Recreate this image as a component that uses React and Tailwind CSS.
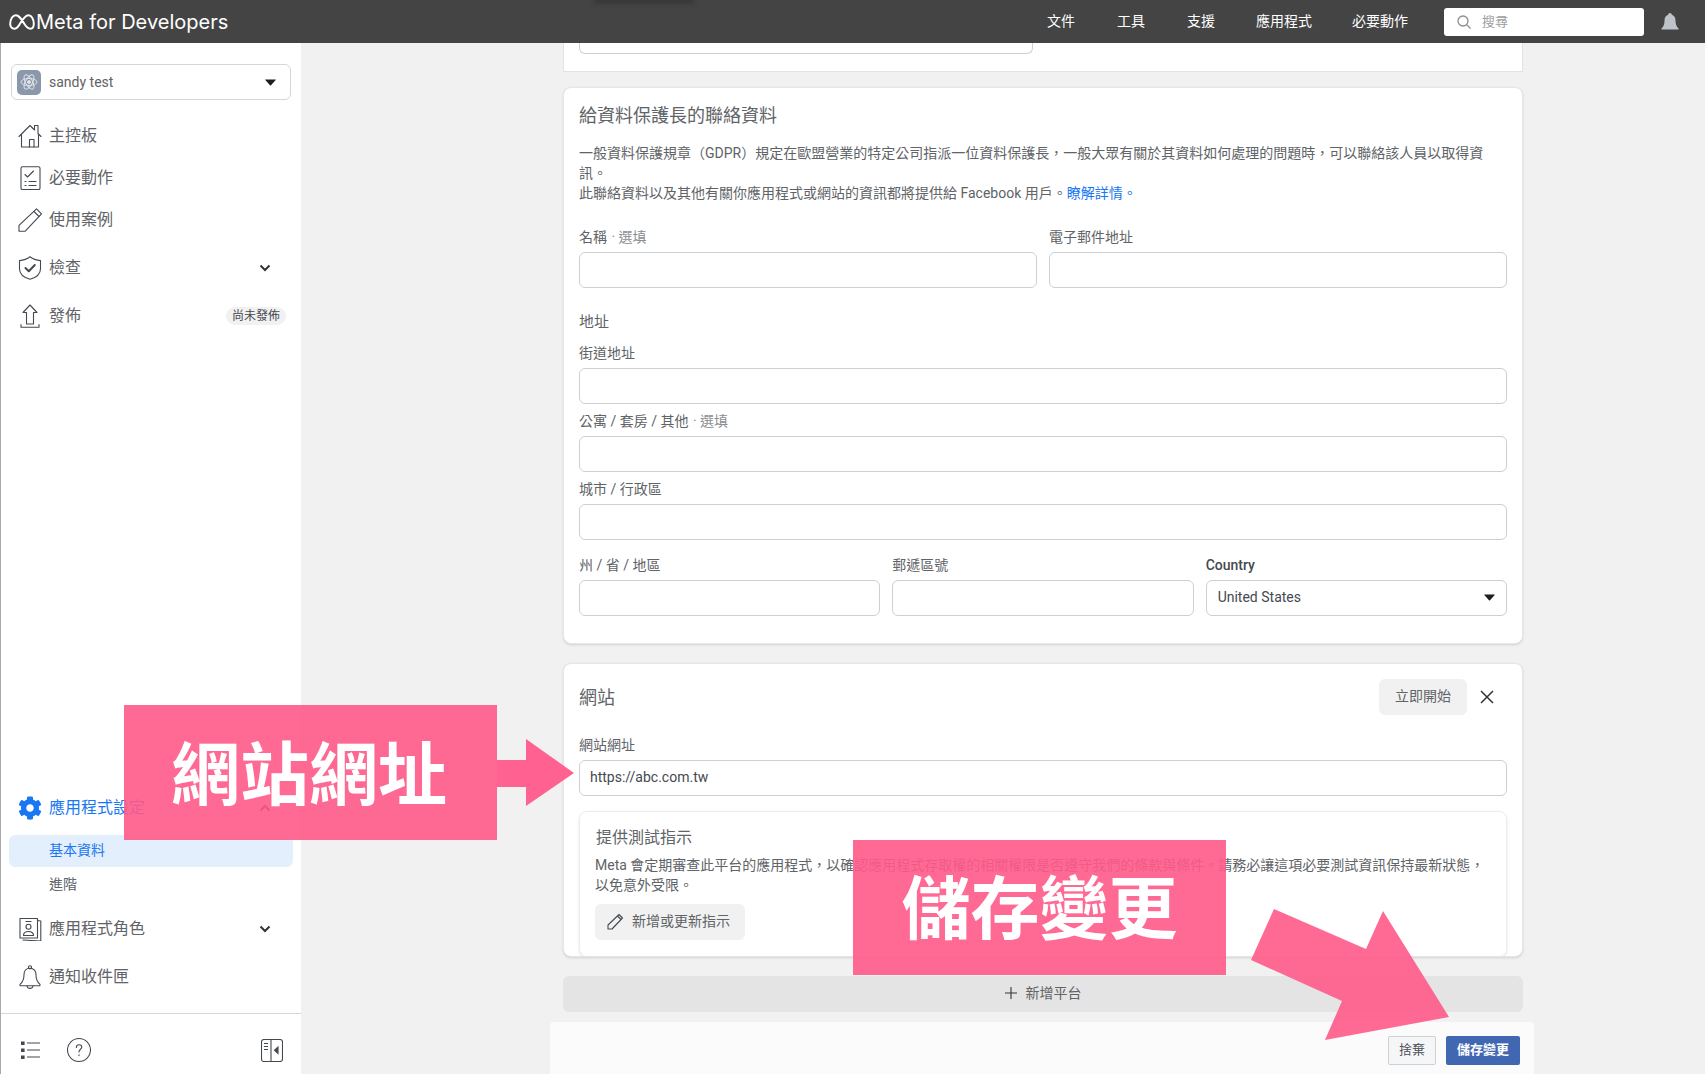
import React from "react";
import { FaCog } from "react-icons/fa";

const fontStack = "font-['Roboto','Noto_Sans_CJK_TC',sans-serif]";

const topLinks = [
  { label: "文件", gap: "mr-[42px]" },
  { label: "工具", gap: "mr-[42px]" },
  { label: "支援", gap: "mr-[41px]" },
  { label: "應用程式", gap: "mr-[40px]" },
  { label: "必要動作", gap: "mr-[36px]" },
];

const MetaLogo = () => (
  <svg width="26" height="16" viewBox="0 0 26 16" fill="none" stroke="white" strokeWidth="2">
    <path d="M1.200 10C1.200 5 3.700 1.300 6.800 1.300 9.800 1.300 11.800 4 15.800 10.500 17.800 13.500 19.300 14.700 21.300 14.700 23.500 14.700 24.800 12.800 24.800 9.800 24.800 4.800 22.500 1.300 19.500 1.300 16.500 1.300 14 4.500 10.500 10.500 8.800 13.500 7.300 14.700 5.300 14.700 2.800 14.700 1.200 12.800 1.200 10z" strokeLinejoin="round" />
  </svg>
);

const Icon = ({ children, className = "" }) => (
  <svg width="24" height="24" viewBox="0 0 24 24" fill="none" stroke="#444950" strokeWidth="1.1" strokeLinecap="round" strokeLinejoin="round" className={className}>
    {children}
  </svg>
);

const HomeIcon = () => (
  <Icon>
    <path d="M1 12.500 12 1.500l4.500 4.500V1.500h3.500V9.500l3 3" />
    <path d="M3.500 10.500V23h17V10.500" />
    <path d="M11.500 23v-7.500h4.500V23" />
  </Icon>
);

const ChecklistIcon = () => (
  <Icon>
    <rect x="3" y="0.800" width="19" height="22.800" rx="1.500" />
    <path d="m7 8.500 2.500 2.500 6-6" />
    <path d="M7 15.500h1M11 15.500h7M7 19.500h1M11 19.500h7" />
  </Icon>
);

const PencilIcon = () => (
  <Icon>
    <path d="M1 23.300V17.300L18.500 0.800l5 5L7 23.300z" />
    <path d="m16 3.500 5 5" />
  </Icon>
);

const ShieldIcon = () => (
  <Icon>
    <path d="M12 0.800c3 2.400 6.500 3.500 10.500 3.800v8.200c0 5-4 8.700-10.500 10.500C5.500 21.500 1.500 17.800 1.500 12.800V4.600C5.500 4.300 9 3.200 12 0.800z" />
    <path d="m7.500 12 3.300 3.300 6-6.300" strokeWidth="2" />
  </Icon>
);

const UploadIcon = () => (
  <Icon>
    <path d="M3 20.500v2.700h18v-2.700" />
    <path d="M12 1 5 8.500h3.500V20h7V8.500H19z" />
  </Icon>
);

const RolesIcon = () => (
  <Icon>
    <path d="M2 1.500h17.500v19.500H2z" />
    <path d="M19.500 3.500 22.800 4v20L5 23" />
    <circle cx="10.500" cy="9.800" r="2.500" />
    <path d="M5.500 18.500c0-2.600 2.200-4 5-4s5 1.400 5 4z" />
    <path d="M8 4.500h5" />
  </Icon>
);

const BellIcon = () => (
  <Icon>
    <path d="M12 3.200c-4 0-6 3-6 6.500 0 5-1 7-3.800 9.500-.6.700-.2 1.600.7 1.600h18.200c.9 0 1.300-.9.700-1.600C19 16.700 18 14.700 18 9.700c0-3.500-2-6.500-6-6.500z" />
    <circle cx="12" cy="2.300" r="1.600" />
    <path d="M9 21c.3 1.500 1.500 2.400 3 2.400s2.700-.9 3-2.400" />
  </Icon>
);

const Chevron = ({ up = false, className = "" }) => (
  <svg width="12" height="8" viewBox="0 0 12 8" fill="none" stroke="#333" strokeWidth="2" className={className}>
    <path d={up ? "M1.500 6.500 6 2l4.500 4.500" : "M1.500 1.500 6 6l4.500-4.500"} />
  </svg>
);

const Caret = () => (
  <svg width="11" height="7" viewBox="0 0 11 7" fill="#1c1e21">
    <path d="M0.500 0.500h10q.5 0 .2.500L6 6.300q-.5.500-1 0L.3 1Q0 .5.500.5z" />
  </svg>
);

const NavRow = ({ icon, label, right, className = "" }) => (
  <div className={`flex items-center h-[24px] pl-[17px] pr-[15px] ${className}`}>
    <span className="w-[24px] h-[24px] flex-none">{icon}</span>
    <span className="ml-[7px] text-[16px] text-[#606367]">{label}</span>
    {right && <span className="ml-auto flex items-center">{right}</span>}
  </div>
);

const Field = ({ label, hint, value, className = "" }) => (
  <div className={className}>
    <div className="h-[20px] leading-[20px] text-[14px] text-[#606367]">
      {label}
      {hint && <span className="ml-[1px] text-[#8a8d91]"> · {hint}</span>}
    </div>
    <div className="mt-[5px] h-[36px] bg-white border border-[#ccd0d5] rounded-[6px] px-[10px] flex items-center text-[14px] text-[#444950]">{value}</div>
  </div>
);

const Sidebar = () => (
  <aside className="w-[301px] flex-none bg-white border-l border-[#a9a9a9] flex flex-col">
    <div className="mt-[21px] ml-[10px] mr-[10px] h-[36px] border border-[#d4d6da] rounded-[6px] flex items-center pl-[5px] pr-[14px]">
      <div className="w-[24px] h-[25px] rounded-[5px] bg-[#8b97ab] flex items-center justify-center">
        <svg width="18" height="18" viewBox="0 0 18 18" fill="none" stroke="#dfe3ea" strokeWidth="1">
          <ellipse cx="9" cy="9" rx="8" ry="3.500" />
          <ellipse cx="9" cy="9" rx="8" ry="3.500" transform="rotate(60 9 9)" />
          <ellipse cx="9" cy="9" rx="8" ry="3.500" transform="rotate(120 9 9)" />
          <circle cx="9" cy="9" r="1.500" fill="#dfe3ea" />
        </svg>
      </div>
      <span className="ml-[8px] text-[14px] text-[#606367]">sandy test</span>
      <span className="ml-auto"><Caret /></span>
    </div>

    <NavRow className="mt-[24px]" icon={<HomeIcon />} label="主控板" />
    <NavRow className="mt-[18px]" icon={<ChecklistIcon />} label="必要動作" />
    <NavRow className="mt-[18px]" icon={<PencilIcon />} label="使用案例" />
    <NavRow className="mt-[24px]" icon={<ShieldIcon />} label="檢查" right={<Chevron className="mr-[15px]" />} />
    <NavRow
      className="mt-[24px]"
      icon={<UploadIcon />}
      label="發佈"
      right={<span className="h-[18px] px-[6px] rounded-full bg-[#f1f1f1] text-[12px] leading-[18px] text-[#444950]">尚未發佈</span>}
    />

    <div className="flex-1" />

    <NavRow icon={<FaCog size={24} color="#1877f2" />} label={<span className="text-[#1877f2]">應用程式設定</span>} right={<Chevron up className="mr-[15px]" />} />
    <div className="mt-[15px] ml-[8px] mr-[8px] h-[32px] pb-[2px] rounded-[6px] bg-[#e4effd] pl-[40px] flex items-center text-[14px] text-[#1877f2]">基本資料</div>
    <div className="h-[34px] pl-[48px] flex items-center text-[14px] text-[#606367]">進階</div>
    <NavRow className="mt-[16px]" icon={<RolesIcon />} label="應用程式角色" right={<Chevron className="mr-[15px]" />} />
    <NavRow className="mt-[24px]" icon={<BellIcon />} label="通知收件匣" />

    <div className="mt-[24px] h-[61px] border-t border-[#d4d6da] flex items-center pt-[12px] pl-[20px] pr-[17px]">
      <svg width="20" height="18" viewBox="0 0 20 18" stroke="#444950" strokeWidth="1.200">
        <path d="M6 2h13M6 9h13M6 16h13" />
        <path d="M0.500 1h2.500v2.500h-2.500zM0.500 8h2.500v2.500h-2.500zM0.500 15h2.500v2.500h-2.500z" fill="#444950" />
      </svg>
      <svg width="24" height="26" viewBox="0 0 24 26" fill="none" stroke="#444950" strokeWidth="1.100" className="ml-[26px]">
        <circle cx="12" cy="13" r="11.500" />
        <path d="M9.300 10.500c0-1.700 1.200-2.800 2.800-2.800s2.700 1 2.700 2.400c0 2.200-2.800 2.200-2.800 4.800" strokeLinecap="round" />
        <path d="M12 17.800v.8" strokeLinecap="round" />
      </svg>
      <svg width="22" height="23" viewBox="0 0 22 23" fill="none" stroke="#444950" strokeWidth="1.100" className="ml-auto mr-[1px]">
        <rect x="0.500" y="0.500" width="21" height="22" rx="2.500" />
        <path d="M10 0.500v22M3 4.500h4M3 7.500h4M3 10.500h4" />
        <path d="M17 8v6.500l-3.500-3.200z" fill="#444950" />
      </svg>
    </div>
  </aside>
);

const TopBar = () => (
  <header className="relative h-[43px] flex-none bg-[#444444] flex items-center pl-[9px] pr-[26px]">
    {/* blurred page text showing through the bar */}
    <div className="absolute left-[594px] top-0 w-[100px] h-[3px] bg-black/30 blur-[2px]" />
    <MetaLogo />
    <span className="ml-[1px] text-[20px] text-white font-['Inter',sans-serif]">Meta for Developers</span>
    <nav className="ml-auto flex items-center text-[14px] text-white">
      {topLinks.map((link) => (
        <span key={link.label} className={link.gap}>{link.label}</span>
      ))}
    </nav>
    <div className="w-[200px] h-[28px] rounded-[3px] bg-white flex items-center pl-[12px] text-[13px] text-[#9a9da1]">
      <svg width="16" height="16" viewBox="0 0 16 16" fill="none" stroke="#8a8d91" strokeWidth="1.300">
        <circle cx="7" cy="7" r="5" />
        <path d="m10.600 10.600 3.900 3.900" />
      </svg>
      <span className="ml-[10px]">搜尋</span>
    </div>
    <svg width="18" height="18" viewBox="0 0 18 18" fill="#bec3c9" className="ml-[17px]">
      <path d="M9 0c1.300 0 1.700.9 1.900 1.800C13.500 2.800 14.500 5 14.500 8c0 3.500 1 5.500 3 7.500.3.400.1 1-.4 1H.9c-.5 0-.7-.6-.4-1 2-2 3-4 3-7.500 0-3 1-5.200 3.600-6.200C7.300.9 7.700 0 9 0z" />
    </svg>
  </header>
);

const Annotations = () => (
  <>
    <div className="absolute left-[124px] top-[705px] w-[373px] h-[135px] bg-[#ff5a8a]/90 flex items-center justify-center pt-[8px] pr-[3px] text-white text-[69px] font-bold">網站網址</div>
    <div className="absolute left-[853px] top-[840px] w-[373px] h-[135px] bg-[#ff5a8a]/90 flex items-center justify-center pt-[6px] text-white text-[69px] font-bold">儲存變更</div>
    <svg width="1705" height="1074" viewBox="0 0 1705 1074" className="absolute inset-0 pointer-events-none">
      <path d="M497 760h29v-21l48 34-48 33v-19h-29z" fill="#ff5a8a" fillOpacity="0.95" />
      <path d="M1274 909l92 40 17-38 66 106-124 23 17-39-91-41z" fill="#ff5a8a" fillOpacity="0.9" />
    </svg>
  </>
);

export default function App() {
  return (
    <div className={`relative w-[1705px] h-[1074px] overflow-hidden bg-[#f1f1f1] flex flex-col ${fontStack}`}>
      <TopBar />
      <div className="flex-1 flex min-h-0">
        <Sidebar />
        <main className="flex-1 pl-[262px] pr-[182px]">
          {/* previous card is scrolled under the top bar */}
          <div className="h-[29px] bg-white border-x border-b border-[#e3e3e3] px-[15px]">
            <div className="w-[454px] h-[11px] border-x border-b border-[#ccd0d5] rounded-b-[6px]" />
          </div>

          <section className="mt-[15px] h-[557px] bg-white border border-[#e6e6e6] rounded-[8px] shadow-sm pt-[16px] px-[15px]">
            <h2 className="h-[24px] leading-[24px] text-[18px] text-[#606367]">給資料保護長的聯絡資料</h2>
            <p className="mt-[15px] text-[14px] leading-[20px] text-[#606367]">
              一般資料保護規章（GDPR）規定在歐盟營業的特定公司指派一位資料保護長，一般大眾有關於其資料如何處理的問題時，可以聯絡該人員以取得資訊。
              <br />
              此聯絡資料以及其他有關你應用程式或網站的資訊都將提供給 Facebook 用戶。<span className="text-[#1877f2]">瞭解詳情。</span>
            </p>
            <div className="mt-[24px] grid grid-cols-2 gap-x-[12px]">
              <Field label="名稱" hint="選填" />
              <Field label="電子郵件地址" />
            </div>
            <h3 className="mt-[22px] h-[24px] leading-[24px] text-[15px] text-[#606367]">地址</h3>
            <Field className="mt-[9px]" label="街道地址" />
            <Field className="mt-[7px]" label="公寓 / 套房 / 其他" hint="選填" />
            <Field className="mt-[7px]" label="城市 / 行政區" />
            <div className="mt-[15px] grid grid-cols-3 gap-x-[12px]">
              <Field label="州 / 省 / 地區" />
              <Field label="郵遞區號" />
              <div>
                <div className="h-[20px] leading-[20px] text-[14px] font-medium text-[#444950]">Country</div>
                <div className="mt-[5px] h-[36px] pb-[1px] border border-[#ccd0d5] rounded-[6px] px-[11px] flex items-center justify-between text-[14px] text-[#444950]">
                  United States
                  <Caret />
                </div>
              </div>
            </div>
          </section>

          <section className="mt-[19px] h-[294px] bg-white border border-[#e6e6e6] rounded-[8px] shadow-sm overflow-hidden pt-[15px] px-[15px]">
            <div className="flex items-center h-[36px]">
              <h2 className="text-[18px] text-[#606367]">網站</h2>
              <button className="ml-auto w-[88px] h-[36px] pb-[2px] rounded-[6px] bg-[#f1f1f1] text-[14px] text-[#606367]">立即開始</button>
              <svg width="14" height="14" viewBox="0 0 14 14" stroke="#333" strokeWidth="1.500" className="ml-[13px] mr-[13px]">
                <path d="m1 1 12 12M13 1 1 13" />
              </svg>
            </div>
            <div className="mt-[20px] h-[20px] leading-[20px] text-[14px] text-[#606367]">網站網址</div>
            <div className="mt-[5px] h-[36px] pb-[1px] border border-[#ccd0d5] rounded-[6px] px-[10px] flex items-center text-[14px] text-[#444950]">https://abc.com.tw</div>
            <div className="mt-[15px] h-[146px] border border-[#ededed] rounded-[8px] shadow-sm pt-[14px] px-[15px]">
              <h3 className="h-[24px] ml-[1px] leading-[24px] text-[16px] text-[#606367]">提供測試指示</h3>
              <p className="mt-[5px] text-[14px] leading-[20px] text-[#606367]">Meta 會定期審查此平台的應用程式，以確認應用程式存取權的相關權限是否遵守我們的條款與條件。請務必讓這項必要測試資訊保持最新狀態，以免意外受限。</p>
              <button className="mt-[9px] w-[150px] h-[36px] pb-[1px] rounded-[6px] bg-[#f1f1f1] flex items-center pl-[12px] text-[14px] text-[#606367]">
                <svg width="17" height="17" viewBox="0 0 17 17" fill="none" stroke="#444950" strokeWidth="1.100" strokeLinejoin="round">
                  <path d="M1 16v-4L12 1.500l3.500 3.500L5 16z" />
                  <path d="m10.500 3 3.500 3.500" />
                </svg>
                <span className="ml-[8px]">新增或更新指示</span>
              </button>
            </div>
          </section>

          <div className="mt-[19px] h-[36px] pb-[2px] rounded-[6px] bg-[#e4e4e4] flex items-center justify-center text-[14px] text-[#606367]">
            <svg width="12" height="12" viewBox="0 0 12 12" stroke="#333" strokeWidth="1.100">
              <path d="M6 0v12M0 6h12" />
            </svg>
            <span className="ml-[9px]">新增平台</span>
          </div>

          <div className="mt-[10px] -ml-[13px] -mr-[11px] h-[52px] bg-[#fbfbfb] rounded-t-[4px] flex items-start justify-end pt-[14px] pr-[14px]">
            <button className="w-[48px] h-[29px] pb-[2px] border border-[#ced0d4] bg-[#f5f6f7] rounded-[2px] text-[13px] text-[#4b4f56]">捨棄</button>
            <button className="ml-[10px] w-[74px] h-[29px] pb-[2px] bg-[#4267b2] rounded-[2px] text-[13px] font-bold text-white">儲存變更</button>
          </div>
        </main>
      </div>
      <Annotations />
    </div>
  );
}
